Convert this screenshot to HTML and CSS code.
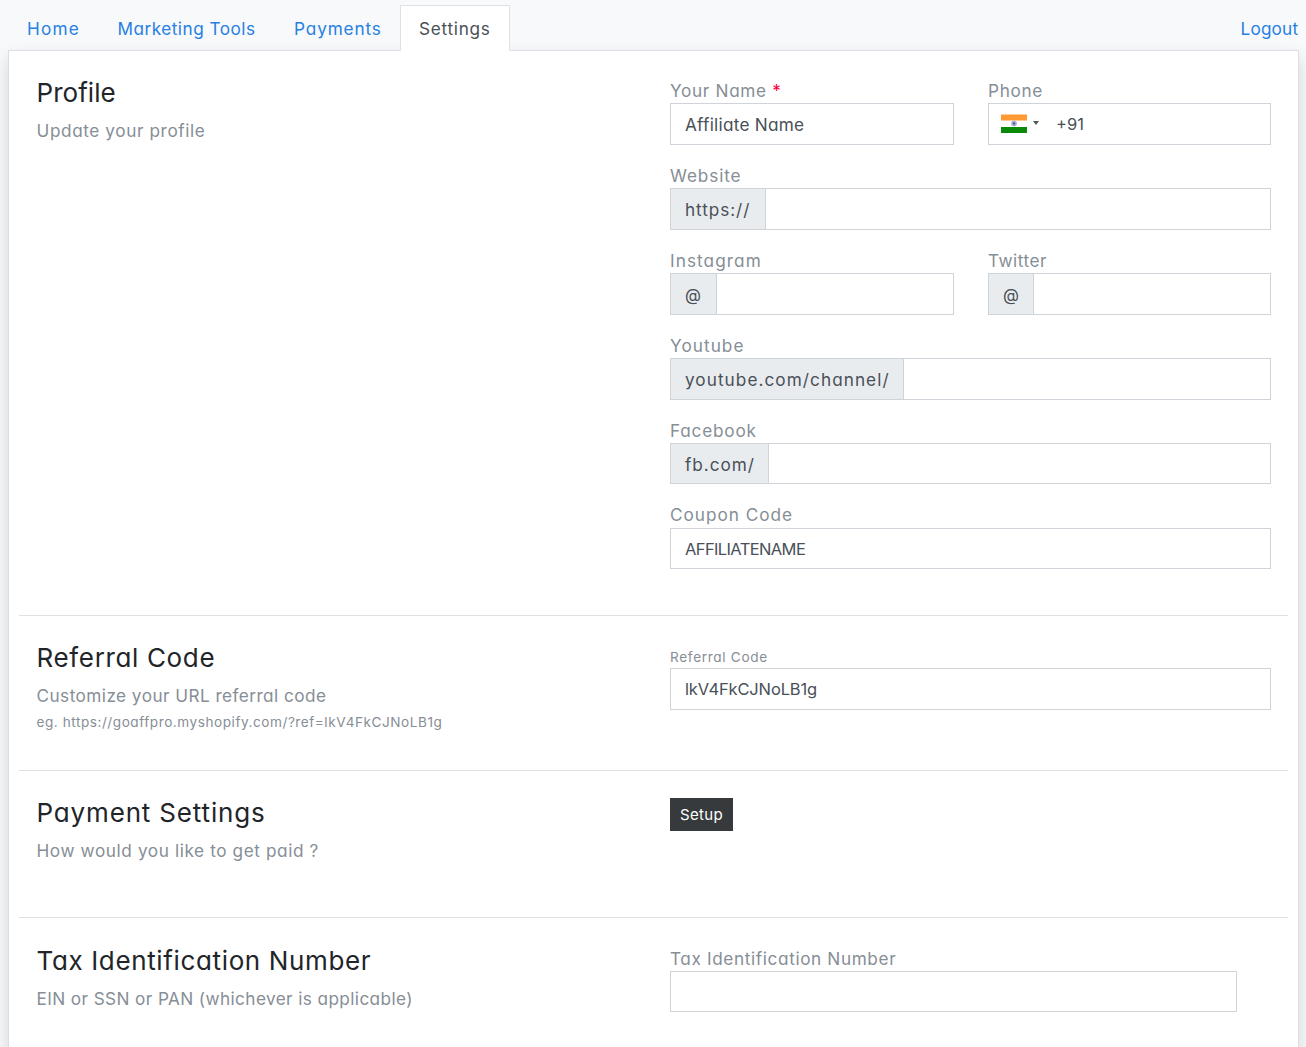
FILE: index.html
```html
<!DOCTYPE html>
<html lang="en">
<head>
<meta charset="utf-8">
<title>Settings</title>
<link rel="stylesheet" href="styles.css">
</head>
<body>
<nav class="tabs">
  <a class="tab home"><span>Home</span></a>
  <a class="tab marketing"><span>Marketing Tools</span></a>
  <a class="tab payments"><span>Payments</span></a>
  <a class="tab active"><span>Settings</span></a>
  <a class="logout"><span>Logout</span></a>
</nav>
<main class="card">
  <section class="section profile">
    <div class="intro">
      <h2 class="t-profile">Profile</h2>
      <p class="t-update">Update your profile</p>
    </div>
    <div class="fields">
      <div class="pair">
        <div class="field"><label>Your Name <b class="required">*</b></label><div class="input"><span class="value t-name">Affiliate Name</span></div></div>
        <div class="field"><label class="t-phone">Phone</label><div class="input phone">
          <svg class="flag" width="26" height="19" viewBox="0 0 26 19"><path fill="#fff" d="M0 0h26v19H0z"/><path fill="#ff9933" d="M0 .5h26V6.500H0z"/><path fill="#098a09" d="M0 13h26v6H0z"/><circle cx="13" cy="9.500" r="2.500" fill="#b5bddb" stroke="#a3add2"/><circle cx="13" cy="9.500" r="1.200" fill="#4659a5"/></svg>
          <svg class="caret" width="6" height="4" viewBox="0 0 6 4"><path fill="#555" d="M0 0h6L3 4z"/></svg>
          <span class="value t-code">+91</span></div></div>
      </div>
      <div class="field"><label class="t-website">Website</label><div class="input"><span class="addon w-http"><span>https://</span></span></div></div>
      <div class="pair">
        <div class="field"><label class="t-insta">Instagram</label><div class="input"><span class="addon w-at"><span>@</span></span></div></div>
        <div class="field"><label class="t-twitter">Twitter</label><div class="input"><span class="addon w-at w-at-right"><span>@</span></span></div></div>
      </div>
      <div class="field"><label class="t-youtube">Youtube</label><div class="input"><span class="addon w-yt"><span>youtube.com/channel/</span></span></div></div>
      <div class="field"><label class="t-facebook">Facebook</label><div class="input"><span class="addon w-fb"><span>fb.com/</span></span></div></div>
      <div class="field"><label class="t-coupon">Coupon Code</label><div class="input"><span class="value t-affcode">AFFILIATENAME</span></div></div>
    </div>
  </section>
  <section class="section referral">
    <div class="intro">
      <h2 class="t-referral">Referral Code</h2>
      <p class="t-customize">Customize your URL referral code</p>
      <small class="t-url">eg. https://goaffpro.myshopify.com/?ref=lkV4FkCJNoLB1g</small>
    </div>
    <div class="fields">
      <div class="field"><label class="small">Referral Code</label><div class="input"><span class="value t-ref">lkV4FkCJNoLB1g</span></div></div>
    </div>
  </section>
  <section class="section payment">
    <div class="intro">
      <h2 class="t-payment">Payment Settings</h2>
      <p class="t-paid">How would you like to get paid ?</p>
    </div>
    <div class="fields"><button class="setup">Setup</button></div>
  </section>
  <section class="section tax">
    <div class="intro">
      <h2 class="t-tax">Tax Identification Number</h2>
      <p class="t-ein">EIN or SSN or PAN (whichever is applicable)</p>
    </div>
    <div class="fields">
      <div class="field"><label class="t-taxlabel">Tax Identification Number</label><div class="input"></div></div>
    </div>
  </section>
</main>
</body>
</html>
```

FILE: styles.css
```css
* { box-sizing: border-box; }
html { height: 100%; overflow: hidden; }
body {
  display: flex;
  flex-direction: column;
  height: 100%;
  margin: 0;
  padding: 5px 7px 0 8px;
  overflow: hidden;
  background: #f8f9fb;
  color: #495057;
  font-family: Inter, "Open Sans", sans-serif;
  font-feature-settings: "cv11";
  font-size: 17.2px;
  line-height: 25.4px;
  white-space: nowrap;
}
.tabs { display: flex; flex: none; height: 46px; position: relative; z-index: 1; }
.tab { border: 1px solid transparent; border-bottom: 0; padding: 10px 0 0 18px; color: #2780e3; letter-spacing: .72px; }
.home { width: 90.5px; letter-spacing: 1.2px; }
.marketing { width: 176.5px; letter-spacing: .48px; }
.payments { width: 125px; letter-spacing: .86px; }
.active { width: 110px; background: #fff; border-color: #dee2e6; color: #495057; }
.logout { margin-left: auto; width: 58.5px; padding-top: 11px; color: #2780e3; letter-spacing: .18px; }
.card {
  flex: 1;
  margin-top: -1px;
  padding: 0 10px;
  background: #fff;
  border: 1px solid #dbdfe4;
  border-bottom: 0;
  box-shadow: 0 8px 16px rgba(0, 0, 0, .15);
}
.section { display: grid; grid-template-columns: 633px 601px; padding: 27px 0 0 18px; border-bottom: 1px solid #dfe0e1; }
.intro { margin-left: -.5px; }
.profile { height: 565px; }
.referral { height: 155px; }
.payment { height: 147px; }
.tax { height: 129px; padding-top: 28px; border-bottom: 0; }
h2 { margin: 0; font-size: 26px; font-weight: 400; line-height: 30px; color: #212529; }
p { margin: 10px 0 0; color: #868e96; }
small { display: block; margin-top: 2px; font-size: 13.6px; color: #868e96; }
.pair { display: grid; grid-template-columns: 284px 283px; gap: 34px; }
.field { height: 84.9px; }
.field label { display: block; height: 25.4px; line-height: 26.4px; color: #868e96; letter-spacing: .68px; }
.field label.small { font-size: 13.6px; line-height: 29px; letter-spacing: .68px; }
.required { color: #ff0039; font-weight: 400; }
.input { display: flex; align-items: center; height: 41.5px; border: 1px solid #ced4da; background: #fff; }
.value { padding: 2px 0 0 14px; }
.addon { display: flex; align-items: center; align-self: stretch; padding: 2px 0 0 14px; background: #e9ecef; border-right: 1px solid #ced4da; letter-spacing: .92px; }
.w-http { width: 95px; }
.w-at { width: 46px; padding-top: 3px; font-size: 16.5px; }
.w-at-right { width: 45px; }
.w-yt { width: 233px; letter-spacing: 1.05px; }
.w-fb { width: 98px; letter-spacing: .97px; }
.phone .flag { margin-left: 12px; margin-top: -1px; }
.phone .caret { margin-left: 6px; margin-top: -2px; }
.phone .value { padding-left: 17px; font-size: 16.5px; }
.setup { display: block; width: 63px; height: 33px; margin: 0; padding: 0; border: 0; background: #373a3c; color: #fff; font: inherit; font-size: 15px; letter-spacing: .35px; }
.tax .input { width: 567px; height: 41px; }
.tax label.t-taxlabel { line-height: 25.4px; letter-spacing: .62px; }

/* Tracking for individual strings */
.t-profile { letter-spacing: .05px; }
.t-update { letter-spacing: .6px; }
.t-name { letter-spacing: .25px; }
.field label.t-phone { letter-spacing: .65px; }
.field label.t-website { letter-spacing: .87px; }
.field label.t-insta { letter-spacing: 1.07px; }
.field label.t-twitter { letter-spacing: .5px; }
.field label.t-youtube { letter-spacing: 1.05px; }
.field label.t-facebook { letter-spacing: .8px; }
.field label.t-coupon { letter-spacing: .98px; }
.t-affcode { font-size: 16.5px; letter-spacing: -.62px; }
.t-ref { font-size: 16.5px; letter-spacing: -.15px; }
.t-referral { letter-spacing: .65px; }
.t-customize { letter-spacing: .45px; }
.t-url { letter-spacing: .54px; }
.t-payment { letter-spacing: .84px; }
.t-paid { letter-spacing: .6px; }
.t-tax { letter-spacing: .64px; }
.t-ein { letter-spacing: .4px; }
```
